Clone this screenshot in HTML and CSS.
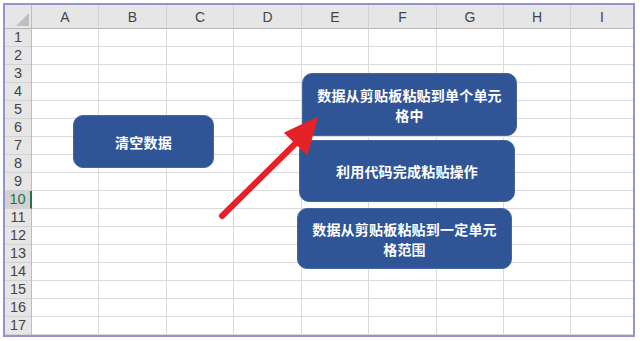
FILE: index.html
```html
<!DOCTYPE html>
<html lang="zh-CN">
<head>
    <meta charset="UTF-8">
    <meta name="viewport" content="width=device-width, initial-scale=1.0">
    <title>粘贴操作示例</title>
    <link rel="stylesheet" href="styles.css">
</head>
<body>
    <div class="sheet">
        <div class="corner"><span class="corner-mark"></span></div>
        <div class="col-head">A</div>
        <div class="col-head">B</div>
        <div class="col-head">C</div>
        <div class="col-head">D</div>
        <div class="col-head">E</div>
        <div class="col-head">F</div>
        <div class="col-head">G</div>
        <div class="col-head">H</div>
        <div class="col-head last">I</div>

        <div class="row-nums">
            <div class="num">1</div>
            <div class="num">2</div>
            <div class="num">3</div>
            <div class="num">4</div>
            <div class="num">5</div>
            <div class="num">6</div>
            <div class="num">7</div>
            <div class="num">8</div>
            <div class="num">9</div>
            <div class="num active">10</div>
            <div class="num">11</div>
            <div class="num">12</div>
            <div class="num">13</div>
            <div class="num">14</div>
            <div class="num">15</div>
            <div class="num">16</div>
            <div class="num">17</div>
        </div>
        <div class="col"></div>
        <div class="col"></div>
        <div class="col"></div>
        <div class="col"></div>
        <div class="col"></div>
        <div class="col"></div>
        <div class="col"></div>
        <div class="col"></div>
        <div class="col last"></div>

        <!-- кнопки-фигуры поверх листа -->
        <div class="shape shape-clear">清空数据</div>
        <div class="shape shape-single">数据从剪贴板粘贴到单个单元<br>格中</div>
        <div class="shape shape-code">利用代码完成粘贴操作</div>
        <div class="shape shape-range">数据从剪贴板粘贴到一定单元<br>格范围</div>

        <svg class="arrow" width="628" height="330" viewBox="0 0 628 330">
            <line x1="217" y1="211" x2="293" y2="136" stroke="#e52228" stroke-width="6" stroke-linecap="round"/>
            <polygon points="312,113 280,128 302,149" fill="#e52228" stroke="#e52228" stroke-width="1.5" stroke-linejoin="round"/>
        </svg>
    </div>
</body>
</html>
```

FILE: styles.css
```css
* {
    margin: 0;
    padding: 0;
    box-sizing: border-box;
}

body {
    background: #ffffff;
    font-family: 'Liberation Sans', Arial, sans-serif;
    color: #444;
}

.sheet {
    position: relative;
    margin: 3px 0 0 3px;
    width: 632px;
    border: 2px solid #9894c9;
    display: grid;
    grid-template-columns: 27px 67px 68px 67px 68px 67px 68px 67px 67px 1fr;
    grid-template-rows: 24px 306px;
    background: #ffffff;
}

.corner {
    position: relative;
    background: #e6e6e6;
    border-right: 1px solid #bdbdbd;
    border-bottom: 1px solid #b4b4b4;
}

.corner-mark {
    position: absolute;
    right: 2px;
    bottom: 2px;
    width: 0;
    height: 0;
    border-left: 13px solid transparent;
    border-bottom: 13px solid #bfbfbf;
}

.col-head {
    background: #e6e6e6;
    border-right: 1px solid #d2d2d2;
    border-bottom: 1px solid #b4b4b4;
    font-size: 14px;
    line-height: 24px;
    text-align: center;
    color: #444;
}

.col-head.last {
    border-right: none;
}

.row-nums {
    background: #e6e6e6;
    border-right: 1px solid #bdbdbd;
}

.num {
    height: 18px;
    border-bottom: 1px solid #d2d2d2;
    font-size: 14.5px;
    line-height: 17px;
    text-align: center;
    color: #444;
}

.num.active {
    background: #d2d2d2;
    color: #217346;
    border-right: 2px solid #217346;
    margin-right: -1px;
}

.col {
    border-right: 1px solid #dadada;
    background: repeating-linear-gradient(to bottom, transparent 0, transparent 17px, #dadada 17px, #dadada 18px);
}

.col.last {
    border-right: none;
}

.shape {
    position: absolute;
    display: flex;
    align-items: center;
    justify-content: center;
    text-align: center;
    background: #2f5597;
    border: 1px solid #44679f;
    border-radius: 10px;
    color: #ffffff;
    font-family: 'Noto Sans CJK SC', 'Liberation Sans', sans-serif;
    font-weight: 700;
    font-size: 14px;
    line-height: 20px;
    letter-spacing: 0.2px;
}

.shape-clear {
    left: 68px;
    top: 110px;
    width: 141px;
    height: 53px;
}

.shape-single {
    left: 297px;
    top: 68px;
    width: 215px;
    height: 63px;
}

.shape-code {
    left: 294px;
    top: 135px;
    width: 216px;
    height: 62px;
}

.shape-range {
    left: 292px;
    top: 203px;
    width: 215px;
    height: 61px;
}

.arrow {
    position: absolute;
    left: 0;
    top: 0;
    pointer-events: none;
}
```
